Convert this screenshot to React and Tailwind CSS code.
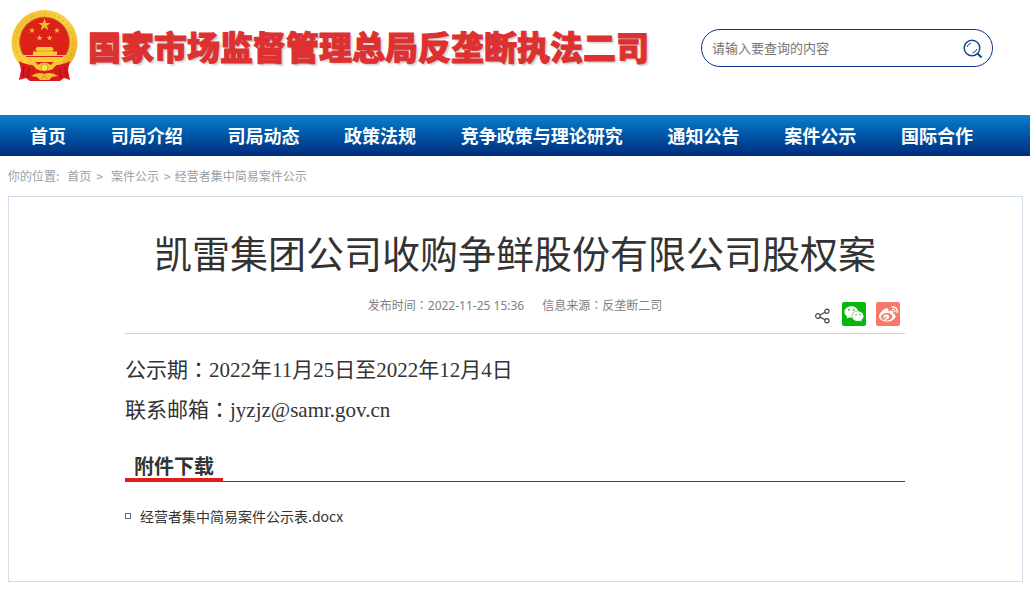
import React from "react";
import { FaWeixin, FaWeibo } from "react-icons/fa";

const navItems = ["首页", "司局介绍", "司局动态", "政策法规", "竞争政策与理论研究", "通知公告", "案件公示", "国际合作"];

function Star({ x, y, r }) {
  const points = Array.from({ length: 10 }, (_, i) => {
    const radius = i % 2 ? r * 0.4 : r;
    const a = (Math.PI / 5) * i - Math.PI / 2;
    return `${(x + radius * Math.cos(a)).toFixed(2)},${(y + radius * Math.sin(a)).toFixed(2)}`;
  }).join(" ");
  return <polygon points={points} fill="#f0b92e" />;
}

function Emblem() {
  return (
    <svg className="h-18 w-17 shrink-0" viewBox="0 0 68 72" role="img" aria-label="国徽">
      <defs>
        <linearGradient id="gold" x1="0" y1="0" x2="1" y2="1">
          <stop offset="0" stopColor="#f3b92c" />
          <stop offset="0.5" stopColor="#fbd345" />
          <stop offset="1" stopColor="#e8a41c" />
        </linearGradient>
      </defs>
      <circle cx="33.5" cy="33" r="33" fill="url(#gold)" />
      <circle cx="33.5" cy="33" r="29" fill="none" stroke="#e3a624" strokeWidth="1.5" strokeDasharray="3 2" opacity="0.5" />
      <circle cx="33.5" cy="32" r="25" fill="#dc2119" stroke="#b98522" strokeWidth="1" />
      <Star x={33.5} y={15} r={6.5} />
      <Star x={21} y={20.5} r={3.2} />
      <Star x={46} y={20.5} r={3.2} />
      <Star x={28.5} y={28} r={3.2} />
      <Star x={38.5} y={28} r={3.2} />
      <path d="M26 37 H41 L43 40 H41.5 V41.5 H46 V45 H55 Q53 50 50 52 H17 Q14 50 12 45 H22 V41.5 H25.5 V40 H24 Z" fill="#f9cb3c" />
      <path d="M25 41 H42" stroke="#d99b22" strokeWidth="0.8" />
      <path d="M15 46.5 H52" stroke="#dc2119" strokeWidth="1.2" />
      <path d="M8 51 Q15 56 22 53 L28 58 H39 L45 53 Q52 56 59 51 L57 60 L59 70 L53 68 L49 71 H19 L15 68 L8 70 L10 60 Z" fill="#da191b" />
      <path d="M13 56 L12 67 M18 58 L17 68 M54 56 L55 67 M49 58 L50 68" stroke="#a31216" strokeWidth="1.2" />
      <path d="M15 52 Q23 49 27 55 Q33 50 40 55 Q44 49 52 52 L49 55 Q45 54 42 59 Q33 63 25 59 Q22 54 18 55 Z" fill="#f8c735" />
      <circle cx="33.5" cy="57.5" r="3.5" fill="#ffe05b" stroke="#d08d1c" strokeWidth="0.8" />
      <path d="M20 66 Q27 61 33.5 64 Q40 61 47 66 L41 67 L38 70 H29 L26 67 Z" fill="#f4bc30" />
      <path d="M31 69 L33.5 65 L36 69" fill="none" stroke="#d2921d" strokeWidth="1" />
    </svg>
  );
}

function SearchIcon() {
  return (
    <svg className="size-5" viewBox="0 0 20 20" fill="none" stroke="#15498f" aria-hidden="true">
      <circle cx="9" cy="9" r="7.8" strokeWidth="1.5" />
      <path d="M14.5 14.5 L18.6 18.5" strokeWidth="2" />
      <path d="M4.2 8 Q5 4.8 8 4.2 M13.8 10 Q12.8 13.5 9.5 13.8" strokeWidth="1" />
    </svg>
  );
}

function ShareIcon() {
  return (
    <svg className="size-4" viewBox="0 0 16 16" fill="none" stroke="#444" strokeWidth="1.2" aria-hidden="true">
      <circle cx="3.9" cy="8" r="2.3" />
      <circle cx="12.9" cy="3.3" r="2.1" />
      <circle cx="12.9" cy="12.7" r="2.1" />
      <path d="M6 7 L11 4.3 M6 9.1 L11 11.7" />
    </svg>
  );
}

function Colon() {
  return <span className="font-['Noto_Sans_CJK_TC',sans-serif] leading-none" lang="zh-TW">：</span>;
}

export default function App() {
  return (
    <div className="bg-white font-['Noto_Sans_CJK_SC',sans-serif] text-[#333]" lang="zh-CN">
      <header className="flex h-[115px] items-start justify-between pr-[37px] pl-[11px]">
        <div className="flex items-center gap-[9px] pt-[10px]">
          <Emblem />
          <h1 className="text-[33px] leading-[60px] font-black whitespace-nowrap text-[#dc3130] [-webkit-text-stroke:1px_#dc3130] [text-shadow:2px_2px_2px_#ccc]">
            国家市场监督管理总局反垄断执法二司
          </h1>
        </div>
        <form className="mt-[29px] flex h-[38px] w-[292px] items-center justify-between rounded-full border border-[#0a3683] pr-[9px] pl-[10px]" onSubmit={(e) => e.preventDefault()}>
          <input className="min-w-0 flex-1 text-[13px] outline-none placeholder:text-[#757575]" type="text" aria-label="搜索" placeholder="请输入要查询的内容" />
          <button type="submit" aria-label="查询" className="pt-[2px]"><SearchIcon /></button>
        </form>
      </header>
      <nav className="flex h-[41px] items-center justify-between bg-linear-to-b from-[#0f7ed0] to-[#002d7c] pr-[57px] pb-[2px] pl-[30px] text-lg font-bold whitespace-nowrap text-white">
        {navItems.map((item) => <a key={item} href="#">{item}</a>)}
      </nav>
      <div className="flex h-10 items-center px-2 text-xs text-[#999fa8]">
        <span className="mr-2">你的位置:</span>
        <a href="#">首页</a>
        <span className="mr-2 ml-[5px]">&gt;</span>
        <a href="#">案件公示</a>
        <span className="mr-1 ml-[5px]">&gt;</span>
        <a href="#">经营者集中简易案件公示</a>
      </div>
      <main className="mr-[7px] mb-3 ml-2 border border-[#d2dcea] pt-[25px] pr-[117px] pb-[53px] pl-[116px]">
        <h2 className="text-center text-[38px] leading-[60px] whitespace-nowrap">凯雷集团公司收购争鲜股份有限公司股权案</h2>
        <div className="grid h-[52px] grid-cols-[1fr_auto_1fr] items-start border-b border-[#d0d0d0]">
          <p className="col-start-2 flex gap-[18px] pt-[14px] font-['Noto_Sans','Noto_Sans_CJK_SC',sans-serif] text-xs leading-5 text-[#808080]">
            <span>发布时间<Colon />2022-11-25 15:36</span>
            <span>信息来源<Colon />反垄断二司</span>
          </p>
          <div className="flex items-center justify-end gap-[10px] pt-5 pr-[5px]">
            <button type="button" aria-label="分享" className="mr-[2px] pt-[3px]"><ShareIcon /></button>
            <a href="#" aria-label="微信" className="flex size-6 items-center justify-center rounded-xs bg-[#06b80d] text-white"><FaWeixin size={20} /></a>
            <a href="#" aria-label="微博" className="flex size-6 items-center justify-center rounded-xs bg-[#f5786b] text-white"><FaWeibo size={19} /></a>
          </div>
        </div>
        <div className="pt-4 font-['Liberation_Serif','Noto_Sans_CJK_SC',serif] text-[21px] leading-10">
          <p>公示期<Colon />2022年11月25日至2022年12月4日</p>
          <p>联系邮箱<Colon />jyzjz@samr.gov.cn</p>
        </div>
        <div className="mt-6 flex border-b border-[#444]">
          <h3 className="-mb-px border-b-4 border-[#dd1f1b] px-[9px] text-xl leading-6 font-bold">附件下载</h3>
        </div>
        <ul className="pt-[22px] text-sm leading-6">
          <li className="flex items-center gap-[9px]">
            <span className="size-[6px] border border-[#5568a0]" />
            <a href="#">经营者集中简易案件公示表.docx</a>
          </li>
        </ul>
      </main>
    </div>
  );
}
